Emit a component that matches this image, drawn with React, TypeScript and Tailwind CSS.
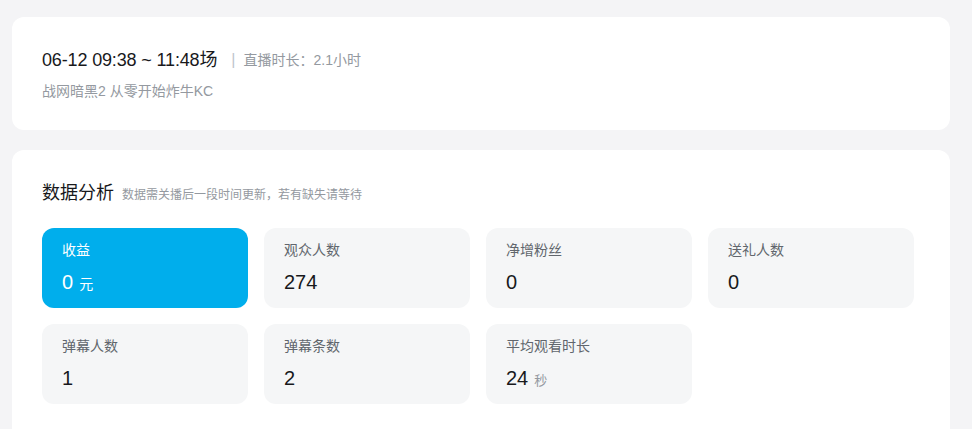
interface Stat {
  label: string
  value: string
  unit?: string
  active?: boolean
}

const stats: Stat[] = [
  { label: "收益", value: "0", unit: "元", active: true },
  { label: "观众人数", value: "274" },
  { label: "净增粉丝", value: "0" },
  { label: "送礼人数", value: "0" },
  { label: "弹幕人数", value: "1" },
  { label: "弹幕条数", value: "2" },
  { label: "平均观看时长", value: "24", unit: "秒" },
]

function StatTile({ stat }: { stat: Stat }) {
  if (stat.active) {
    return (
      <div className="h-20 rounded-xl bg-[#00aeec] px-5 pt-[12px]">
        <p className="text-[14px] leading-5 text-white">{stat.label}</p>
        <p className="mt-[10px] flex items-baseline text-[20px] leading-6 text-white">
          {stat.value}
          <span className="ml-[6px] text-[14px]">{stat.unit}</span>
        </p>
      </div>
    )
  }
  return (
    <div className="h-20 rounded-xl bg-[#f5f6f7] px-5 pt-[12px]">
      <p className="text-[14px] leading-5 text-[#61666d]">{stat.label}</p>
      <p className="mt-[10px] flex items-baseline text-[20px] leading-6 text-[#18191c]">
        {stat.value}
        {stat.unit && <span className="ml-[6px] text-[13px] text-[#9499a0]">{stat.unit}</span>}
      </p>
    </div>
  )
}

export default function App() {
  return (
    <div
      className="min-h-[429px] bg-[#f4f4f6] px-3 pt-[17px]"
      style={{ fontFamily: '"Liberation Sans", "Noto Sans CJK SC", sans-serif' }}
    >
      {/* Session info */}
      <div className="w-[938px] rounded-xl bg-white px-[30px] pb-[29px] pt-[30px]">
        <div className="flex items-center">
          <span className="text-[18px] leading-[26px] tracking-[-0.15px] text-[#18191c]">06-12 09:38 ~ 11:48场</span>
          <span className="ml-[14px] text-[16px] text-[#c0c4cc]">|</span>
          <span className="ml-[8px] text-[14px] text-[#9499a0]">直播时长：2.1小时</span>
        </div>
        <p className="mt-[8px] text-[14px] leading-5 text-[#9499a0]">战网暗黑2 从零开始炸牛KC</p>
      </div>

      {/* Data */}
      <div className="mt-5 h-[300px] w-[938px] rounded-t-xl bg-white px-[30px] pt-[30px]">
        <div className="flex items-baseline">
          <h2 className="text-[18px] leading-[26px] text-[#18191c]">数据分析</h2>
          <span className="ml-[8px] text-[12px] text-[#9499a0]">数据需关播后一段时间更新，若有缺失请等待</span>
        </div>
        <div className="mt-[22px] grid grid-cols-[repeat(4,206px)] gap-4">
          {stats.map((s) => (
            <StatTile key={s.label} stat={s} />
          ))}
        </div>
      </div>
    </div>
  )
}
